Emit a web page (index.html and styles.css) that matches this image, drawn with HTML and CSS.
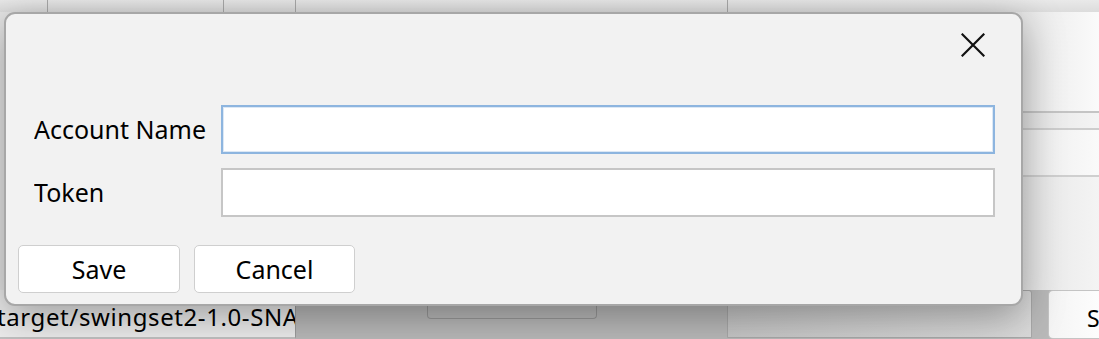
FILE: index.html
```html
<!DOCTYPE html>
<html>
<head>
<meta charset="utf-8">
<link rel="stylesheet" href="styles.css">
</head>
<body>
<div class="backdrop">
  <div class="topbar">
    <div class="cell c1"></div>
    <div class="cell c2"></div>
    <div class="cell c3"></div>
    <div class="cell c4"></div>
    <div class="cell c5"></div>
  </div>
  <div class="middle">
    <div class="under"></div>
    <div class="side">
      <div class="side-a"></div>
      <div class="side-b"></div>
      <div class="side-c"></div>
      <div class="side-d"></div>
    </div>
  </div>
  <div class="bottombar">
    <div class="status"><span class="status-text">target/swingset2-1.0-SNA</span></div>
    <div class="gap1"><div class="ghost-btn"></div></div>
    <div class="bigbox"></div>
    <div class="side-btn"><span>S</span></div>
  </div>
</div>

<div class="dialog">
  <div class="titlebar">
    <button class="close" aria-label="Close">
      <svg width="24" height="24" viewBox="0 0 24 24"><path d="M1.5 1.5 L22.5 22.5 M22.5 1.5 L1.5 22.5" stroke="#111" stroke-width="2.2" stroke-linecap="square" fill="none"/></svg>
    </button>
  </div>
  <div class="form">
    <label class="label">Account Name</label>
    <div class="field focused"></div>
    <label class="label">Token</label>
    <div class="field"></div>
  </div>
  <div class="actions">
    <button class="btn save">Save</button>
    <button class="btn cancel">Cancel</button>
  </div>
</div>
</body>
</html>
```
FILE: styles.css
```css
html, body {
  margin: 0;
  padding: 0;
  width: 1099px;
  height: 339px;
  overflow: hidden;
  font-family: "Noto Sans", "Open Sans", sans-serif;
}

.backdrop {
  width: 1099px;
  height: 339px;
  display: grid;
  grid-template-rows: 12px 278px 49px;
  background: #e4e4e4;
}

.topbar {
  display: flex;
  background: linear-gradient(#e9e9e9, #dcdcdc);
}
.cell { border-right: 1px solid #a9a9a9; }
.c1 { width: 47px; }
.c2 { width: 175px; }
.c3 { width: 71px; }
.c4 { width: 431px; }
.c5 { flex: 1; border-right: none; }

.middle {
  display: flex;
}
.under {
  width: 1022px;
  background: #e6e6e6;
}
.side {
  flex: 1;
  display: flex;
  flex-direction: column;
  background: linear-gradient(90deg, #e8e8e8, #fbfbfb);
}
.side-a { height: 99px; border-bottom: 2px solid #c4c4c4; }
.side-b { height: 15px; border-bottom: 2px solid #cdcdcd; background: linear-gradient(90deg, #e4e4e4, #f4f4f4); }
.side-c { height: 45px; border-bottom: 2px solid #cfcfcf; background: linear-gradient(90deg, #ececec, #fafafa); }
.side-d { flex: 1; background: linear-gradient(90deg, #e6e6e6, #f4f4f4); }

.bottombar {
  display: flex;
  background: #b9b9b9;
}
.status {
  width: 296px;
  border-right: 1px solid #9c9c9c;
  border-bottom: 2px solid #c0c0c0;
  background: #ececec;
  overflow: hidden;
  white-space: nowrap;
  box-sizing: border-box;
  padding-top: 13px;
}
.status-text {
  display: block;
  margin-left: -3px;
  font-size: 24px;
  letter-spacing: 0.6px;
  line-height: 28px;
  color: #000;
}
.gap1 {
  width: 431px;
  padding-left: 131px;
  box-sizing: border-box;
}
.ghost-btn {
  width: 170px;
  height: 29px;
  border: 1px solid #999;
  border-top: none;
  border-radius: 0 0 4px 4px;
  box-sizing: border-box;
}
.bigbox {
  width: 305px;
  border: 1px solid #a8a8a8;
  border-top-right-radius: 3px;
  background: linear-gradient(90deg, #c6c6c6, #dadada);
  box-sizing: border-box;
  height: 48px;
}
.side-btn {
  margin-left: 16px;
  flex: 1;
  border: 1px solid #c4c4c4;
  border-right: none;
  border-radius: 5px 0 0 5px;
  background: linear-gradient(90deg, #f4f4f4, #fdfdfd);
  font-size: 23px;
  padding-left: 38px;
  padding-top: 11px;
  box-sizing: border-box;
  overflow: hidden;
}

.dialog {
  position: absolute;
  left: 4px;
  top: 12px;
  width: 1019px;
  height: 294px;
  box-sizing: border-box;
  border: 2px solid #a7a7a7;
  border-radius: 11px;
  background: #f2f2f2;
  box-shadow: 0 10px 40px rgba(0, 0, 0, 0.34);
  display: flex;
  flex-direction: column;
}

.titlebar {
  height: 91px;
  box-sizing: border-box;
  display: flex;
  justify-content: flex-end;
  align-items: flex-start;
  padding: 19px 36px 0 0;
}
.close {
  border: none;
  background: none;
  padding: 0;
  width: 24px;
  height: 24px;
  display: block;
}
.close svg { display: block; }

.form {
  display: grid;
  grid-template-columns: 187px 1fr;
  grid-auto-rows: 49px;
  row-gap: 14px;
  padding: 0 26px 0 28px;
  align-items: center;
}
.label {
  font-size: 25px;
  color: #000;
  white-space: nowrap;
  overflow: hidden;
  line-height: 49px;
}
.field {
  height: 49px;
  box-sizing: border-box;
  background: #fff;
  border: 2px solid #c6c6c6;
}
.field.focused {
  border: 2px solid #8db5df;
  box-shadow: inset 0 0 0 1px #dce8f5;
}

.actions {
  display: flex;
  gap: 14px;
  margin-top: 28px;
  padding-left: 12px;
}
.btn {
  height: 48px;
  box-sizing: border-box;
  background: #fff;
  border: 1px solid #cfcfcf;
  border-radius: 5px;
  font-family: "Noto Sans", "Open Sans", sans-serif;
  font-size: 25px;
  color: #000;
  padding: 0;
}
.save { width: 162px; }
.cancel { width: 161px; }
```
